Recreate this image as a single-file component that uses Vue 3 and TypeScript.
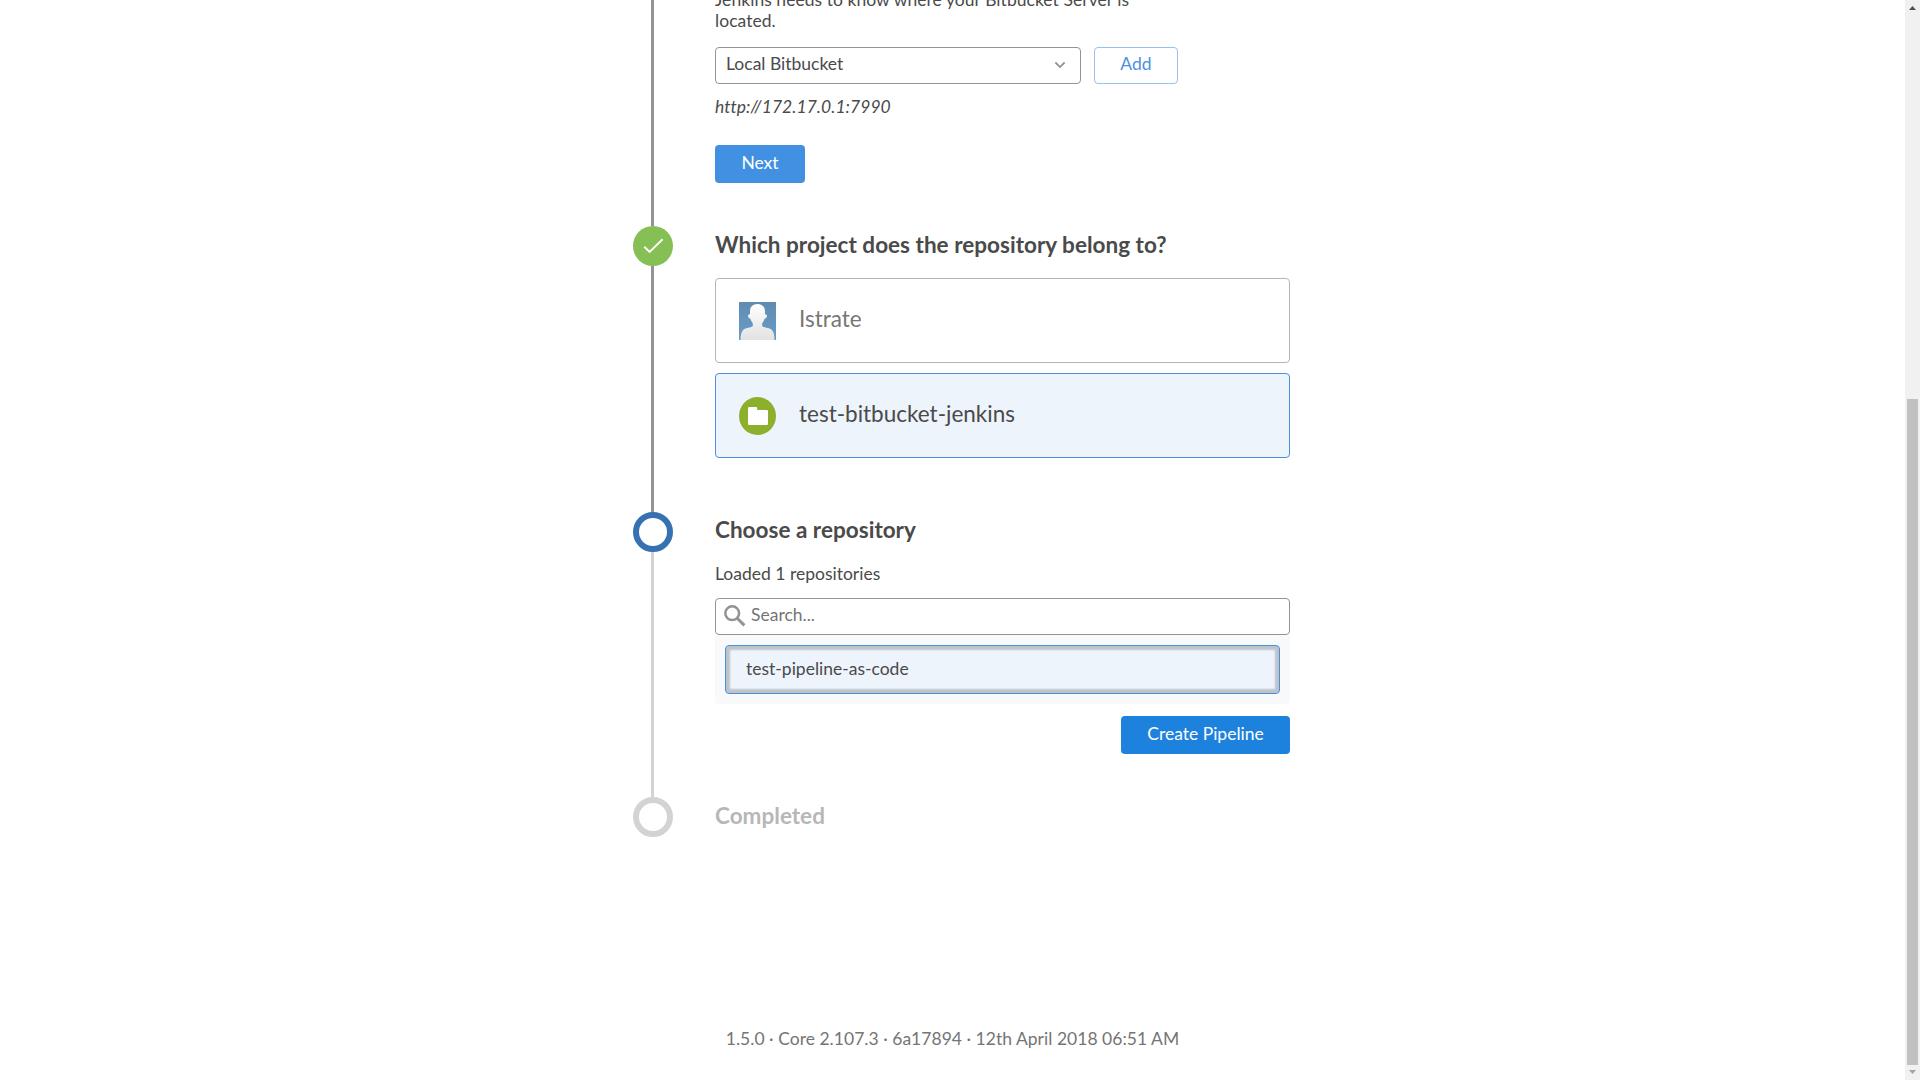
<script setup lang="ts">
interface Project {
  name: string
  kind: 'user' | 'folder'
  selected: boolean
}

const projects: Project[] = [
  { name: 'Istrate', kind: 'user', selected: false },
  { name: 'test-bitbucket-jenkins', kind: 'folder', selected: true },
]
const repositories: string[] = ['test-pipeline-as-code']
</script>

<template>
  <div class="page">
    <main class="flow">
      <section class="step step-server">
        <div class="rail"><span class="line done"></span></div>
        <div class="content">
          <p class="intro">Jenkins needs to know where your Bitbucket Server is located.</p>
          <div class="server-row">
            <div class="select">
              <span>Local Bitbucket</span>
              <svg width="12" height="8" viewBox="0 0 12 8"><path d="M1.4 1.5 6 6.1l4.6-4.6" fill="none" stroke="#949393" stroke-width="1.8" /></svg>
            </div>
            <button class="btn outline">Add</button>
          </div>
          <em class="url">http://172.17.0.1:7990</em>
          <button class="btn next">Next</button>
        </div>
      </section>

      <section class="step step-project">
        <div class="rail">
          <span class="dot ok">
            <svg width="40" height="40" viewBox="0 0 40 40"><path d="M11.3 20.8 16.6 26 29.6 13.3" fill="none" stroke="#fff" stroke-width="1.9" /></svg>
          </span>
          <span class="line done"></span>
        </div>
        <div class="content">
          <h2>Which project does the repository belong to?</h2>
          <div class="cards">
            <div v-for="p in projects" :key="p.name" class="card" :class="{ selected: p.selected }">
              <svg v-if="p.kind === 'user'" class="avatar" viewBox="0 0 37 38">
                <defs>
                  <linearGradient id="sky" x1="0" y1="0" x2="0" y2="1"><stop offset="0" stop-color="#5f8cb1" /><stop offset="1" stop-color="#6b9bc7" /></linearGradient>
                  <linearGradient id="bust" x1="0" y1="0" x2="0" y2="1"><stop offset="0" stop-color="#fff" /><stop offset="1" stop-color="#e2e2e2" /></linearGradient>
                </defs>
                <rect width="37" height="38" fill="url(#sky)" />
                <path d="M18.5 2C13.8 2 11 5 11 9v3.2c-1.5 0-2.2.8-1.9 2.2.3 1.3 1.1 2 2.2 2.2.5 2 1.4 3.4 2.5 4.6v3.1c-2.4 1.5-7.8 1.6-10.1 4.1C2.1 30.2 1.5 34 1.5 38h34c0-4-.6-7.8-2.2-9.6-2.3-2.5-7.7-2.6-10.1-4.1v-3.1c1.1-1.2 2-2.6 2.5-4.6 1.1-.2 1.9-.9 2.2-2.2.3-1.4-.4-2.2-1.9-2.2V9c0-4-2.8-7-7.5-7z" fill="url(#bust)" />
              </svg>
              <svg v-else class="avatar" viewBox="0 0 37 38">
                <ellipse cx="18.5" cy="19" rx="18.5" ry="19" fill="#8cb02b" />
                <path d="M9 11.2q0-1.2 1.2-1.2h7q1 0 1 1v1.9h9.5q1.3 0 1.3 1.2v12.700q0 1.200-1.200 1.200H10q-1 0-1-1z" fill="#fff" />
              </svg>
              <span>{{ p.name }}</span>
            </div>
          </div>
        </div>
      </section>

      <section class="step step-repository">
        <div class="rail">
          <span class="dot active"></span>
          <span class="line"></span>
        </div>
        <div class="content">
          <h2>Choose a repository</h2>
          <p class="loaded">Loaded {{ repositories.length }} repositories</p>
          <div class="search">
            <svg width="22" height="22" viewBox="0 0 22 22" fill="none" stroke="#949393"><circle cx="8.2" cy="8.2" r="6.9" stroke-width="2.5" /><path d="m13.200 13.200 7.200 7.200" stroke-width="3" /></svg>
            <span>Search...</span>
          </div>
          <div class="list">
            <div v-for="r in repositories" :key="r" class="repo">{{ r }}</div>
          </div>
          <button class="btn create">Create Pipeline</button>
        </div>
      </section>

      <section class="step step-completed">
        <div class="rail"><span class="dot"></span></div>
        <div class="content"><h2>Completed</h2></div>
      </section>

      <footer>1.5.0 · Core 2.107.3 · 6a17894 · 12th April 2018 06:51 AM</footer>
    </main>
    <aside class="scrollbar">
      <svg width="15" height="19" viewBox="0 0 15 19"><path d="M4 10 7.500 6 11 10z" fill="#505050" /></svg>
      <span class="thumb"></span>
      <svg width="15" height="15" viewBox="0 0 15 15"><path d="M4 5 7.500 9 11 5z" fill="#a3a3a3" /></svg>
    </aside>
  </div>
</template>

<style>
body {
  margin: 0;
  overflow: hidden;
}
</style>

<style scoped>
* {
  box-sizing: border-box;
}
.page {
  display: flex;
  height: 1080px;
  overflow: hidden;
  background: #fff;
  color: #4a4a4a;
  font: 17.5px/21px Lato, sans-serif;
}
.flow {
  display: flex;
  flex: 1;
  flex-direction: column;
  padding-left: 633px;
}
.step {
  display: flex;
  flex: none;
  gap: 42px;
}
.step-server { height: 226px; }
.step-project { height: 286px; }
.step-repository { height: 285px; }
.step-completed { height: 229px; }
.rail {
  display: flex;
  flex-direction: column;
  align-items: center;
  width: 40px;
}
.line {
  flex: 1;
  width: 3px;
  margin-right: 1px;
  background: #d3d3d3;
}
.line.done { background: #949393; }
.dot {
  flex: none;
  width: 40px;
  height: 40px;
  border: 6px solid #d3d3d3;
  border-radius: 50%;
}
.dot.active { border-color: #3672b1; }
.dot.ok {
  border: 0;
  background: #86c055;
}
.dot svg { display: block; }
.content {
  display: flex;
  flex-direction: column;
  width: 575px;
}
h2, p { margin: 0; }
h2 {
  padding-top: 5px;
  font-size: 22.5px;
  line-height: 27px;
  font-weight: 700;
  letter-spacing: 0.02px;
}
.step-repository h2 { padding-top: 4px; }
.step-completed h2 { color: #b7b7b7; }
.intro {
  width: 450px;
  margin-top: -11px;
  margin-bottom: 16px;
  letter-spacing: 0.045px;
}
.server-row {
  display: flex;
  gap: 13px;
}
.select {
  display: flex;
  justify-content: space-between;
  align-items: center;
  width: 366px;
  height: 37px;
  padding: 0 14px 3px 10px;
  border: 1px solid #949393;
  border-radius: 4px;
}
.select span { margin-top: -2px; }
.select svg { margin-top: 2px; }
.btn {
  height: 38px;
  padding: 0 0 4px;
  border: 0;
  border-radius: 4px;
  color: #fff;
  font: inherit;
}
.outline {
  width: 84px;
  height: 37px;
  border: 1px solid #97c2ee;
  background: #fff;
  color: #4a90e2;
}
.url {
  margin: 12px 0 28px;
  letter-spacing: 0.055px;
}
.next {
  width: 90px;
  background: #4190e2;
}
.cards {
  display: flex;
  flex-direction: column;
  gap: 10px;
  margin-top: 20px;
}
.card {
  display: flex;
  align-items: center;
  gap: 23px;
  height: 85px;
  padding-left: 23px;
  border: 1px solid #b5b5b5;
  border-radius: 4px;
  color: #767676;
  font-size: 22.5px;
  line-height: 27px;
}
.card span { margin-top: -5px; }
.card.selected {
  border-color: #4a90d9;
  background: #edf4fc;
  color: #4a4a4a;
}
.avatar {
  width: 37px;
  height: 38px;
}
.loaded { margin: 20px 0 14px; }
.search {
  display: flex;
  align-items: center;
  gap: 5px;
  height: 37px;
  padding: 0 8px 2px;
  border: 1px solid #949393;
  border-radius: 4px;
  color: #757575;
}
.search svg { margin-top: 1px; }
.search span { margin-top: -3px; }
.list {
  height: 69px;
  padding: 10px;
  border-radius: 0 0 4px 4px;
  background: #f7f9fb;
}
.repo {
  height: 49px;
  padding: 12px 20px;
  border: 1px solid #4a90d9;
  border-radius: 4px;
  background: #edf4fc;
  box-shadow: inset 0 0 2px 4px rgba(0, 0, 0, 0.2);
}
.create {
  align-self: flex-end;
  width: 169px;
  margin-top: 12px;
  background: #1d82dd;
}
footer {
  display: flex;
  justify-content: center;
  margin-left: -633px;
  padding-top: 2px;
  color: #757575;
  letter-spacing: 0.025px;
}
.scrollbar {
  display: flex;
  flex-direction: column;
  justify-content: space-between;
  width: 15px;
  background: #f1f1f1;
}
.thumb {
  width: 11px;
  height: 666px;
  margin: auto 2px 0;
  background: #c1c1c1;
}
.scrollbar svg { display: block; }
</style>
